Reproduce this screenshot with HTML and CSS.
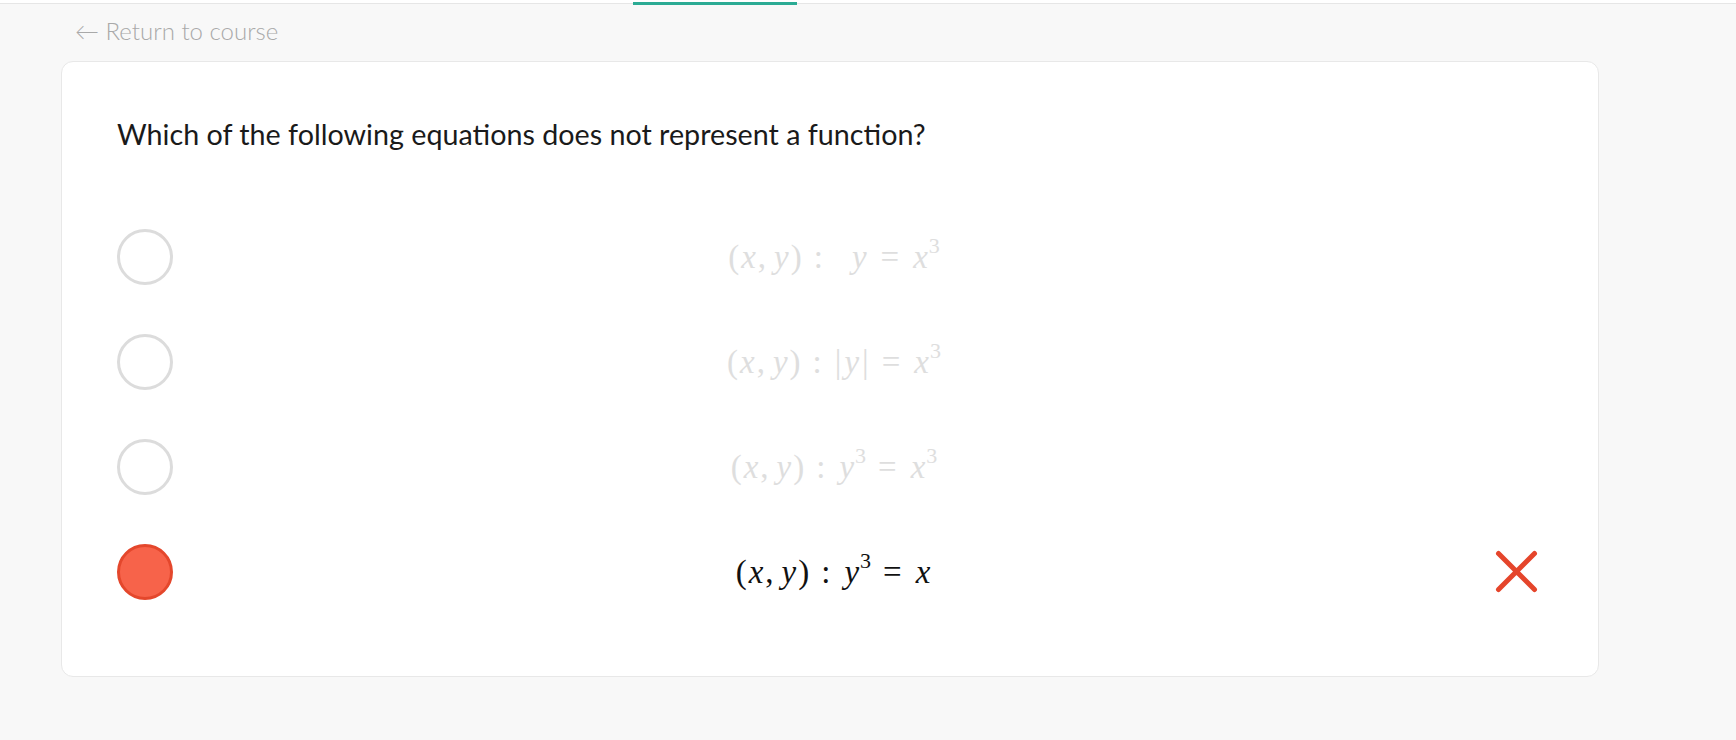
FILE: index.html
```html
<!DOCTYPE html>
<html>
<head>
<meta charset="utf-8">
<link rel="stylesheet" href="styles.css">
</head>
<body>
<div class="topbar"><div class="progress"></div></div>
<a class="back" href="#">← Return to course</a>
<div class="card">
  <div class="question">Which of the following equations does not represent a function?</div>
  <div class="options">
    <div class="option">
      <span class="radio"></span>
      <div class="eq faded"><span>(</span><i>x</i><span class="comma">,</span><i>y</i><span>)</span><span class="rel wide">:</span><i>y</i><span class="rel">=</span><i>x</i><sup>3</sup></div>
      <span class="mark"></span>
    </div>
    <div class="option">
      <span class="radio"></span>
      <div class="eq faded"><span>(</span><i>x</i><span class="comma">,</span><i>y</i><span>)</span><span class="rel">:</span><span class="bar">|</span><i>y</i><span class="bar">|</span><span class="rel">=</span><i>x</i><sup>3</sup></div>
      <span class="mark"></span>
    </div>
    <div class="option">
      <span class="radio"></span>
      <div class="eq faded"><span>(</span><i>x</i><span class="comma">,</span><i>y</i><span>)</span><span class="rel">:</span><i>y</i><sup>3</sup><span class="rel">=</span><i>x</i><sup>3</sup></div>
      <span class="mark"></span>
    </div>
    <div class="option">
      <span class="radio selected"></span>
      <div class="eq"><span>(</span><i>x</i><span class="comma">,</span><i>y</i><span>)</span><span class="rel">:</span><i>y</i><sup>3</sup><span class="rel">=</span><i>x</i></div>
      <span class="mark">
        <svg width="43" height="43" viewBox="0 0 43 43"><path d="M3.5 3.5 L39.5 39.5 M39.5 3.5 L3.5 39.5" stroke="#e5452b" stroke-width="5" stroke-linecap="round" fill="none"/></svg>
      </span>
    </div>
  </div>
</div>
</body>
</html>
```
FILE: styles.css
```css
html, body {
  margin: 0;
  padding: 0;
}
body {
  background: #f8f8f8;
  font-family: Lato, "Open Sans", sans-serif;
  width: 1736px;
  height: 740px;
  overflow: hidden;
}
.topbar {
  position: relative;
  height: 3px;
  background: #ffffff;
  border-bottom: 1px solid #e6e6e6;
}
.progress {
  position: absolute;
  left: 633px;
  top: 2px;
  width: 164px;
  height: 3px;
  background: #2bab94;
}
.back {
  display: block;
  margin: 13px 0 0 75px;
  font-size: 24px;
  line-height: 28px;
  color: #a9a9a9;
  text-decoration: none;
  font-weight: 300;
}
.card {
  margin: 16px 0 0 61px;
  width: 1538px;
  height: 616px;
  box-sizing: border-box;
  background: #ffffff;
  border: 1px solid #e8e8e8;
  border-radius: 12px;
  padding: 55px 60px 0 55px;
}
.question {
  font-size: 28.7px;
  line-height: 34px;
  color: #1a1a1a;
}
.options {
  margin-top: 53px;
  display: flex;
  flex-direction: column;
}
.option {
  height: 105px;
  display: grid;
  grid-template-columns: 56px 1fr 43px;
  align-items: center;
}
.radio {
  width: 56px;
  height: 56px;
  box-sizing: border-box;
  border: 3px solid #dcdcdc;
  border-radius: 50%;
}
.radio.selected {
  background: #f7634a;
  border-color: #e4472c;
}
.eq {
  display: flex;
  justify-content: center;
  align-items: baseline;
  font-family: "Liberation Serif", "DejaVu Serif", serif;
  font-size: 33px;
  color: #111111;
  padding-top: 2px;
}
.eq.faded {
  color: #dedede;
}
.eq i {
  font-style: italic;
  margin: 0 2px;
}
.eq sup {
  font-size: 22px;
  line-height: 0;
  position: relative;
  top: -15px;
  margin-left: -1px;
}
.comma {
  margin-right: 6px;
}
.rel {
  margin: 0 12px;
}
.rel.wide {
  margin-right: 27px;
}
.bar {
  margin: 0 1px;
}
.mark {
  display: flex;
  width: 43px;
  height: 43px;
}
```
